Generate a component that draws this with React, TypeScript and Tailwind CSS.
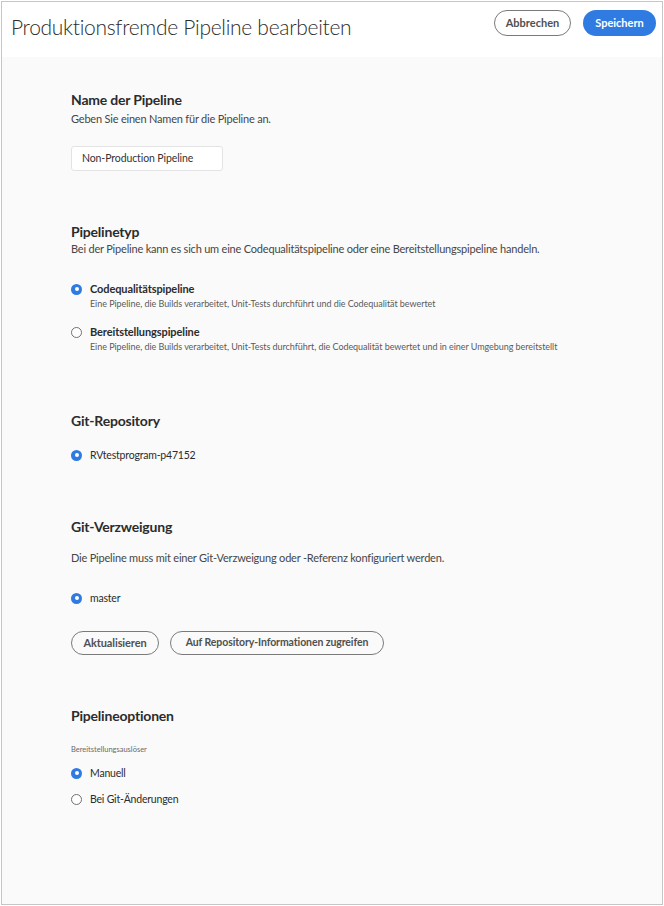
import React from 'react'

const font = "font-['Lato',sans-serif]"

function Radio({ checked }: { checked?: boolean }) {
    return checked ? (
        <span className="flex h-[11px] w-[11px] shrink-0 items-center justify-center rounded-full bg-[#2f7be2]">
            <span className="h-[4px] w-[4px] rounded-full bg-white" />
        </span>
    ) : (
        <span className="h-[11px] w-[11px] shrink-0 rounded-full border-[1.5px] border-[#707070] bg-white" />
    )
}

function Heading({ children, className = '' }: { children: React.ReactNode; className?: string }) {
    return (
        <h2 className={`text-[14px] leading-[18px] font-bold tracking-[-0.2px] text-[#2c2c2c] ${className}`}>
            {children}
        </h2>
    )
}

function Desc({ children, className = '' }: { children: React.ReactNode; className?: string }) {
    return <p className={`text-[11px] leading-[16px] tracking-[-0.2px] text-[#464646] ${className}`}>{children}</p>
}

function Option({ checked, label, sub, className = '' }: { checked?: boolean; label: string; sub?: string; className?: string }) {
    return (
        <div className={className}>
            <div className="flex items-center gap-[8px]">
                <Radio checked={checked} />
                {sub ? (
                    <span className="text-[11px] leading-[16px] font-bold tracking-[-0.1px] text-[#2c2c2c]">{label}</span>
                ) : (
                    <span className="text-[10.5px] leading-[16px] tracking-[-0.2px] text-[#2c2c2c]">{label}</span>
                )}
            </div>
            {sub && <p className="pl-[19px] text-[9px] leading-[14px] tracking-[-0.05px] text-[#5a5a5a]">{sub}</p>}
        </div>
    )
}

export default function App() {
    return (
        <div className={`h-[906px] w-[664px] bg-white p-px ${font}`}>
            <div className="flex h-full flex-col border border-[#c6c6c6]">
                {/* header */}
                <div className="flex h-[55px] items-start justify-between bg-white pl-[9px] pr-[6px]">
                    <h1 className="mt-[11px] text-[21px] leading-[28px] font-light tracking-[-0.3px] text-[#2c2c2c]">
                        Produktionsfremde Pipeline bearbeiten
                    </h1>
                    <div className="mt-[8px] flex gap-[12px]">
                        <button className="h-[26px] w-[77px] rounded-full border-[1.5px] border-[#7a7a7a] bg-white text-[11px] font-bold text-[#505050]">
                            Abbrechen
                        </button>
                        <button className="h-[26px] w-[73px] rounded-full bg-[#2f7be2] text-[11px] font-bold text-white">
                            Speichern
                        </button>
                    </div>
                </div>

                {/* form */}
                <div className="flex-1 bg-[#fafafa] pl-[69px] pt-[34px]">
                    <Heading>Name der Pipeline</Heading>
                    <Desc className="mt-[2px]">Geben Sie einen Namen für die Pipeline an.</Desc>
                    <div className="mt-[19px] flex h-[25px] w-[152px] items-center rounded-[3px] border border-[#e3e3e3] bg-white pl-[10px] text-[10.5px] tracking-[-0.1px] text-[#333]">
                        Non-Production Pipeline
                    </div>

                    <Heading className="mt-[52px]">Pipelinetyp</Heading>
                    <Desc>Bei der Pipeline kann es sich um eine Codequalitätspipeline oder eine Bereitstellungspipeline handeln.</Desc>
                    <Option
                        className="mt-[24px]"
                        checked
                        label="Codequalitätspipeline"
                        sub="Eine Pipeline, die Builds verarbeitet, Unit-Tests durchführt und die Codequalität bewertet"
                    />
                    <Option
                        className="mt-[13px]"
                        label="Bereitstellungspipeline"
                        sub="Eine Pipeline, die Builds verarbeitet, Unit-Tests durchführt, die Codequalität bewertet und in einer Umgebung bereitstellt"
                    />

                    <Heading className="mt-[58px]">Git-Repository</Heading>
                    <Option className="mt-[17px]" checked label="RVtestprogram-p47152" />

                    <Heading className="mt-[55px]">Git-Verzweigung</Heading>
                    <Desc className="mt-[14px]">Die Pipeline muss mit einer Git-Verzweigung oder -Referenz konfiguriert werden.</Desc>
                    <Option className="mt-[24px]" checked label="master" />
                    <div className="mt-[25px] flex gap-[11px]">
                        <button className="h-[24px] w-[88px] rounded-full border-[1.5px] border-[#7a7a7a] text-[11px] font-bold tracking-[-0.1px] text-[#505050]">
                            Aktualisieren
                        </button>
                        <button className="h-[24px] w-[214px] rounded-full border-[1.5px] border-[#7a7a7a] text-[10.5px] font-bold tracking-[-0.1px] text-[#505050]">
                            Auf Repository-Informationen zugreifen
                        </button>
                    </div>

                    <Heading className="mt-[52px]">Pipelineoptionen</Heading>
                    <p className="mt-[19px] text-[7.5px] leading-[12px] text-[#6a6a6a]">Bereitstellungsauslöser</p>
                    <Option className="mt-[9px]" checked label="Manuell" />
                    <Option className="mt-[10px]" label="Bei Git-Änderungen" />
                </div>
            </div>
        </div>
    )
}
